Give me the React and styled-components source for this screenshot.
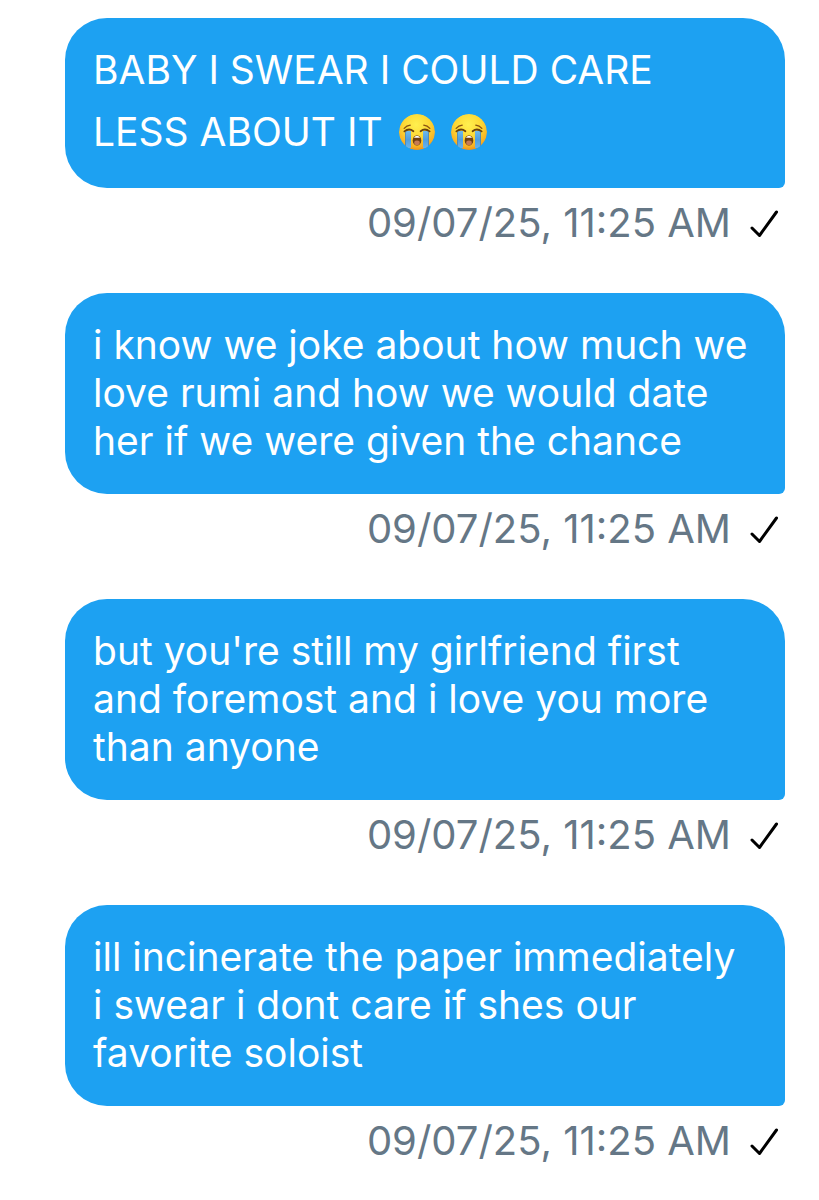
import styled, { createGlobalStyle } from "styled-components";

const messages = [
	{
		id: 1,
		lines: ["BABY I SWEAR I COULD CARE", "LESS ABOUT IT"],
		sobs: 2,
		time: "09/07/25, 11:25 AM",
	},
	{
		id: 2,
		lines: [
			"i know we joke about how much we",
			"love rumi and how we would date",
			"her if we were given the chance",
		],
		time: "09/07/25, 11:25 AM",
	},
	{
		id: 3,
		lines: [
			"but you're still my girlfriend first",
			"and foremost and i love you more",
			"than anyone",
		],
		time: "09/07/25, 11:25 AM",
	},
	{
		id: 4,
		lines: [
			"ill incinerate the paper immediately",
			"i swear i dont care if shes our",
			"favorite soloist",
		],
		time: "09/07/25, 11:25 AM",
	},
];

const SobEmoji = () => (
	<Emoji viewBox="0 0 36 36" role="img" aria-label="loudly crying face">
		<defs>
			<radialGradient id="face" cx="0.48" cy="0.3" r="0.72">
				<stop offset="0" stopColor="#fff04f" />
				<stop offset="0.5" stopColor="#fdd835" />
				<stop offset="0.85" stopColor="#f8ae22" />
				<stop offset="1" stopColor="#e98a18" />
			</radialGradient>
			<linearGradient id="tear" x1="0" y1="0" x2="0" y2="1">
				<stop offset="0" stopColor="#6fb9ea" />
				<stop offset="0.5" stopColor="#4f9fe0" />
				<stop offset="1" stopColor="#65b3ee" />
			</linearGradient>
			<clipPath id="round">
				<circle cx="18" cy="18" r="18" />
			</clipPath>
		</defs>
		<g clipPath="url(#round)">
			<circle cx="18" cy="18" r="18" fill="url(#face)" />
			<path d="M6.5 17H12V34H6.5ZM24 17h5.5v17H24Z" fill="url(#tear)" />
			<path
				d="M6.5 18v15M29.5 18v15"
				stroke="#3f82bd"
				strokeWidth="0.8"
				fill="none"
			/>
		</g>
		<path
			d="M5.2 14.4Q7.6 11.6 11.2 11.2M30.8 14.4Q28.4 11.6 24.8 11.2"
			stroke="#8a5210"
			strokeWidth="1.3"
			strokeLinecap="round"
			fill="none"
		/>
		<path
			d="M5.4 17.4Q10 13.8 14.4 17.2M21.6 17.2Q26 13.8 30.6 17.4"
			stroke="#68400e"
			strokeWidth="1.8"
			strokeLinecap="round"
			fill="none"
		/>
		<ellipse cx="18" cy="26.4" rx="4.3" ry="5.2" fill="#70400f" />
		<path d="M14.8 23.8Q18 19.8 21.2 23.8Z" fill="#fff" />
		<ellipse cx="18" cy="28.7" rx="2.8" ry="2.3" fill="#c77a52" />
	</Emoji>
);

const Message = (props) => {
	const { lines, sobs = 0, time } = props;
	return (
		<MessageItem>
			<Bubble $tall={sobs > 0}>
				{lines.map((line, i) => (
					<BubbleLine key={line}>
						{line}
						{i === lines.length - 1 &&
							Array.from({ length: sobs }, (_, n) => <SobEmoji key={n} />)}
					</BubbleLine>
				))}
			</Bubble>
			<MessageMeta>
				<time>{time}</time>
				<Check viewBox="0 0 30 30" role="img" aria-label="Sent">
					<path d="M3 20L10.5 27.5L27.5 4" />
				</Check>
			</MessageMeta>
		</MessageItem>
	);
};

export default function App() {
	return (
		<>
			<GlobalStyle />
			<Conversation>
				{messages.map((message) => (
					<Message key={message.id} {...message} />
				))}
			</Conversation>
		</>
	);
}

const GlobalStyle = createGlobalStyle`
	body {
		margin: 0;
		background: #fff;
		font-family: Inter, "Liberation Sans", sans-serif;
	}
`;
const Conversation = styled.main`
	display: flex;
	flex-direction: column;
	gap: 46px;
	padding: 18px 34px 34px 65px;
`;
const MessageItem = styled.article`
	display: flex;
	flex-direction: column;
	gap: 11px;
`;
const Bubble = styled.div`
	padding: ${(props) => (props.$tall ? "21px 28px 25px" : "28px 28px 29px")};
	border-radius: 42px 42px 6px 42px;
	background-color: #1da1f2;
	color: #fff;
	font-size: 39px;
	line-height: ${(props) => (props.$tall ? "62px" : "48px")};
`;
const BubbleLine = styled.p`
	display: flex;
	align-items: center;
	gap: 16px;
	margin: 0;
`;
const MessageMeta = styled.div`
	display: flex;
	align-items: center;
	justify-content: flex-end;
	gap: 18px;
	padding-right: 6px;
	color: #657786;
	font-size: 40px;
	line-height: 48px;
`;
const Emoji = styled.svg`
	flex: none;
	width: 36px;
	height: 36px;
`;
const Check = styled.svg`
	width: 30px;
	height: 30px;
	fill: none;
	stroke: #000;
	stroke-width: 3;
	stroke-linecap: round;
	stroke-linejoin: round;
`;
